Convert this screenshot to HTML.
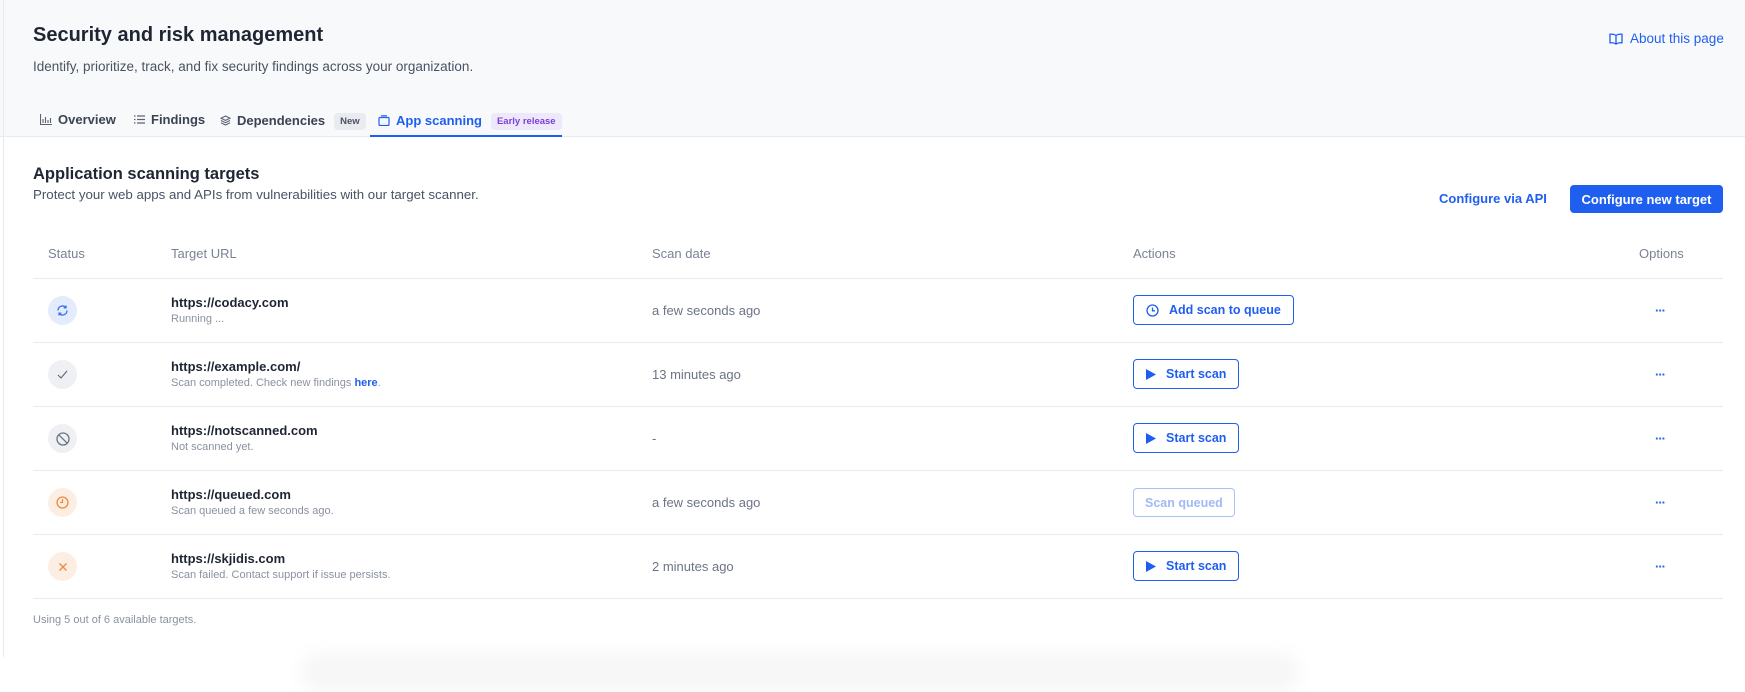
<!DOCTYPE html>
<html><head><meta charset="utf-8">
<style>
*{box-sizing:border-box;margin:0;padding:0}
body{width:1745px;height:657px;overflow:hidden;background:#fff;font-family:"Liberation Sans",sans-serif;color:#1f2533;position:relative}
.hdr{position:absolute;left:0;top:0;width:1745px;height:137px;background:#f8f9fb;border-bottom:1px solid #e8eaee}
.lb{position:absolute;left:3px;top:0;width:1px;height:657px;background:#e8eaee}
.abs{position:absolute;white-space:nowrap}
h1{position:absolute;left:33px;top:24px;font-size:20px;font-weight:bold;color:#1f2533}
.sub{left:33px;top:59px;font-size:13.5px;color:#4a5264}
.tab{top:112px;font-size:13px;font-weight:bold;color:#3b4252;display:flex;align-items:center;gap:6px}
.badge{font-size:9.5px;font-weight:bold;padding:3px 6px;border-radius:4px;background:#e9ebef;color:#4a5264;margin-left:3px;position:relative;top:1px}
.about{left:1609px;top:31px;font-size:13.5px;color:#1f5ff0;display:flex;align-items:center;gap:7px}
h2{position:absolute;left:33px;top:165px;font-size:16.5px;font-weight:bold}
.desc{left:33px;top:187px;font-size:13.3px;color:#4a5264}
.btnp{position:absolute;left:1570px;top:185px;width:153px;height:28px;background:#1f5ff0;color:#fff;border-radius:4px;font-size:13px;font-weight:bold;display:flex;align-items:center;justify-content:center}
.api{left:1439px;top:191px;font-size:13px;font-weight:bold;color:#1f5ff0}
.th{top:246px;font-size:13px;color:#7a8294}
.line{position:absolute;left:33px;width:1690px;height:1px;background:#e8eaee}
.circ{position:absolute;left:48px;width:29px;height:29px;border-radius:50%;display:flex;align-items:center;justify-content:center}
.url{font-size:13px;font-weight:bold;color:#1f2533}
.st{font-size:11px;color:#8a91a0}
.date{font-size:13px;color:#6b7385}
.ob{position:absolute;left:1133px;height:30px;border:1.5px solid #1f5ff0;border-radius:4px;color:#1f5ff0;font-size:12.5px;font-weight:bold;display:flex;align-items:center;padding:0 12px;gap:10px}
.dots{position:absolute;left:1655px;font-size:13px;font-weight:bold;color:#1f5ff0;letter-spacing:-1px}
</style></head><body>
<div class="hdr"></div>
<div class="lb"></div>
<h1>Security and risk management</h1>
<div class="abs sub">Identify, prioritize, track, and fix security findings across your organization.</div>
<div class="abs about"><svg width="14" height="12" viewBox="0 0 14 12" fill="none" stroke="#1f5ff0" stroke-width="1.3"><path d="M7 2.5C5.5 1.3 3.5 1 1 1.2v8.6c2.5-.2 4.5.1 6 1.3 1.5-1.2 3.5-1.5 6-1.3V1.2C10.5 1 8.5 1.3 7 2.5zM7 2.5v8.6"/></svg>About this page</div>

<div class="abs tab" style="left:40px"><svg width="12" height="11" viewBox="0 0 12 11" fill="none" stroke="#5a6274" stroke-width="1.1"><path d="M.5 0v10.5H12M3 9V5M5.5 9V3M8 9V6M10.5 9V4"/></svg>Overview</div>
<div class="abs tab" style="left:134px"><svg width="11" height="9" viewBox="0 0 11 9" stroke="#5a6274" stroke-width="1.2"><path d="M0 1h1.5M3 1h8M0 4.5h1.5M3 4.5h8M0 8h1.5M3 8h8"/></svg>Findings</div>
<div class="abs tab" style="left:220px"><svg width="11" height="11" viewBox="0 0 11 11" fill="none" stroke="#5a6274" stroke-width="1.1"><path d="M5.5 1 10 3.2 5.5 5.4 1 3.2zM1 5.5l4.5 2.2L10 5.5M1 7.8 5.5 10 10 7.8"/></svg>Dependencies<span class="badge">New</span></div>
<div class="abs tab" style="left:378px;color:#1f5ff0"><svg width="12" height="11" viewBox="0 0 12 11" fill="none" stroke="#1f5ff0" stroke-width="1.2"><rect x="1" y="2.5" width="10" height="8" rx="1"/><path d="M3 .8h6"/></svg>App scanning<span class="badge" style="background:#ede9fb;color:#7b3fd8">Early release</span></div>
<div style="position:absolute;left:370px;top:135px;width:192px;height:2px;background:#1f5ff0"></div>

<h2>Application scanning targets</h2>
<div class="abs desc">Protect your web apps and APIs from vulnerabilities with our target scanner.</div>
<div class="abs api">Configure via API</div>
<div class="btnp">Configure new target</div>

<div class="abs th" style="left:48px">Status</div>
<div class="abs th" style="left:171px">Target URL</div>
<div class="abs th" style="left:652px">Scan date</div>
<div class="abs th" style="left:1133px">Actions</div>
<div class="abs th" style="left:1639px">Options</div>
<div class="line" style="top:278px"></div>
<div class="line" style="top:342px"></div>
<div class="line" style="top:406px"></div>
<div class="line" style="top:470px"></div>
<div class="line" style="top:534px"></div>
<div class="line" style="top:598px"></div>

<!-- row1 -->
<div class="circ" style="top:296px;background:#e3ebfd"><svg width="13" height="13" viewBox="0 0 13 13" fill="none" stroke="#3b74f0" stroke-width="1.3"><path d="M2 6.5a4.5 4.5 0 0 1 8-2.8M11 6.5a4.5 4.5 0 0 1-8 2.8M10 1.5v2.3H7.7M3 11.5V9.2h2.3"/></svg></div>
<div class="abs url" style="left:171px;top:295px">https://codacy.com</div>
<div class="abs st" style="left:171px;top:313px">Running ...</div>
<div class="abs date" style="left:652px;top:303px">a few seconds ago</div>
<div class="ob" style="top:295px"><svg width="13" height="13" viewBox="0 0 13 13" fill="none" stroke="#1f5ff0" stroke-width="1.3"><circle cx="6.5" cy="6.5" r="5.5"/><path d="M6.5 3.5v3.3h2.5"/></svg>Add scan to queue</div>
<div class="dots" style="top:303px">···</div>

<!-- row2 -->
<div class="circ" style="top:360px;background:#eef0f3"><svg width="11" height="9" viewBox="0 0 11 9" fill="none" stroke="#5a6274" stroke-width="1.1"><path d="M1 5l3 3 6-7"/></svg></div>
<div class="abs url" style="left:171px;top:359px">https://example.com/</div>
<div class="abs st" style="left:171px;top:377px">Scan completed. Check new findings <b style="color:#1f5ff0">here</b>.</div>
<div class="abs date" style="left:652px;top:367px">13 minutes ago</div>
<div class="ob" style="top:359px"><svg width="10" height="11" viewBox="0 0 10 11"><path d="M0 0l10 5.5L0 11z" fill="#1f5ff0"/></svg>Start scan</div>
<div class="dots" style="top:367px">···</div>

<!-- row3 -->
<div class="circ" style="top:424px;background:#eef0f3"><svg width="14" height="14" viewBox="0 0 14 14" fill="none" stroke="#6b7385" stroke-width="1.3"><circle cx="7" cy="7" r="6"/><path d="M2.8 2.8l8.4 8.4"/></svg></div>
<div class="abs url" style="left:171px;top:423px">https://notscanned.com</div>
<div class="abs st" style="left:171px;top:441px">Not scanned yet.</div>
<div class="abs date" style="left:652px;top:431px">-</div>
<div class="ob" style="top:423px"><svg width="10" height="11" viewBox="0 0 10 11"><path d="M0 0l10 5.5L0 11z" fill="#1f5ff0"/></svg>Start scan</div>
<div class="dots" style="top:431px">···</div>

<!-- row4 -->
<div class="circ" style="top:488px;background:#fdeee3"><svg width="13" height="13" viewBox="0 0 13 13" fill="none" stroke="#f08a3c" stroke-width="1.3"><circle cx="6.5" cy="6.5" r="5.5"/><path d="M6.5 3v3.5H4"/></svg></div>
<div class="abs url" style="left:171px;top:487px">https://queued.com</div>
<div class="abs st" style="left:171px;top:505px">Scan queued a few seconds ago.</div>
<div class="abs date" style="left:652px;top:495px">a few seconds ago</div>
<div class="ob" style="top:488px;border-color:#a8c2f7;color:#a0baf5;height:29px;padding:0 11px">Scan queued</div>
<div class="dots" style="top:495px">···</div>

<!-- row5 -->
<div class="circ" style="top:552px;background:#fdeee3"><svg width="10" height="10" viewBox="0 0 10 10" fill="none" stroke="#f08a3c" stroke-width="1.3"><path d="M1.5 1.5l7 7M8.5 1.5l-7 7"/></svg></div>
<div class="abs url" style="left:171px;top:551px">https://skjidis.com</div>
<div class="abs st" style="left:171px;top:569px">Scan failed. Contact support if issue persists.</div>
<div class="abs date" style="left:652px;top:559px">2 minutes ago</div>
<div class="ob" style="top:551px"><svg width="10" height="11" viewBox="0 0 10 11"><path d="M0 0l10 5.5L0 11z" fill="#1f5ff0"/></svg>Start scan</div>
<div class="dots" style="top:559px">···</div>

<div class="abs st" style="left:33px;top:614px">Using 5 out of 6 available targets.</div>
<div style="position:absolute;left:300px;top:652px;width:1000px;height:40px;border-radius:30px;background:rgba(0,0,0,0.03);filter:blur(8px)"></div>
</body></html>
